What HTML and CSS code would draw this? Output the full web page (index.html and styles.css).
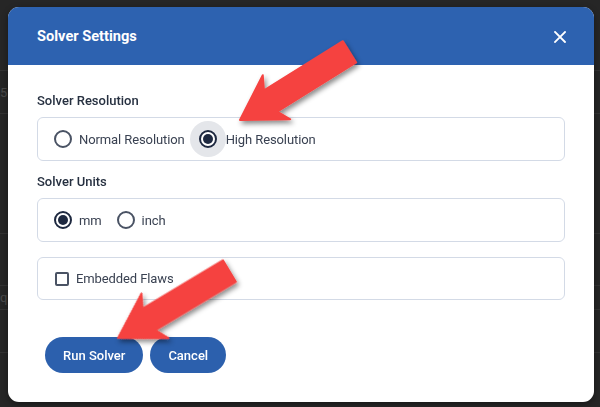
FILE: index.html
```html
<!DOCTYPE html>
<html>
<head>
<meta charset="utf-8">
<link rel="stylesheet" href="styles.css">
</head>
<body>
<div class="page">
  <div class="bg-row r1"></div>
  <div class="bg-row r2"><span>5</span></div>
  <div class="bg-row r3"></div>
  <div class="bg-row r4"></div>
  <div class="bg-row r5"><span>q</span></div>
  <div class="bg-row r6"></div>
</div>

<div class="overlay">
  <div class="dialog">
    <div class="header">
      <span class="title">Solver Settings</span>
      <svg class="close" width="12" height="12" viewBox="0 0 12 12"><path d="M1 1L11 11M11 1L1 11" stroke="#fff" stroke-width="1.8" stroke-linecap="square"/></svg>
    </div>
    <div class="body">
      <div class="label">Solver Resolution</div>
      <div class="box">
        <label class="opt"><span class="radio"></span>Normal Resolution</label>
        <label class="opt gap"><span class="radio checked focus"></span>High Resolution</label>
      </div>
      <div class="label l2">Solver Units</div>
      <div class="box">
        <label class="opt"><span class="radio checked"></span>mm</label>
        <label class="opt gap2"><span class="radio"></span>inch</label>
      </div>
      <div class="box b3">
        <label class="opt"><span class="check"></span>Embedded Flaws</label>
      </div>
      <div class="actions">
        <button class="btn">Run Solver</button>
        <button class="btn">Cancel</button>
      </div>
    </div>
  </div>

  <svg class="arrows" width="600" height="407" viewBox="0 0 600 407">
    <defs>
      <filter id="sh" x="-30%" y="-30%" width="160%" height="160%">
        <feDropShadow dx="2" dy="3" stdDeviation="2.5" flood-color="#000" flood-opacity="0.45"/>
      </filter>
    </defs>
    <g filter="url(#sh)">
      <g transform="translate(240,120) rotate(-31.9)">
        <polygon points="0,0 43,-26 36,-12.5 129,-12.5 129,12.5 36,12.5 43,26" fill="#f54341" stroke="#f54341" stroke-width="2" stroke-linejoin="round"/>
      </g>
      <g transform="translate(118,338) rotate(-31)">
        <polygon points="0,0 43,-26 36,-12.5 130,-12.5 130,12.5 36,12.5 43,26" fill="#f54341" stroke="#f54341" stroke-width="2" stroke-linejoin="round"/>
      </g>
    </g>
  </svg>
</div>
</body>
</html>
```

FILE: styles.css
```css
* { box-sizing: border-box; }
html, body {
  margin: 0;
  padding: 0;
  width: 600px;
  height: 407px;
  overflow: hidden;
  background: #262626;
  font-family: Roboto, "Liberation Sans", sans-serif;
}
.page {
  display: flex;
  flex-direction: column;
  padding-top: 28px;
}
.bg-row {
  height: 43px;
  border-bottom: 1px solid #333333;
  color: #4a4a4a;
  font-size: 13px;
  display: flex;
  align-items: center;
}
.r3 { height: 120px; }
.r4 { height: 52px; }
.r5 { height: 24px; }

.overlay {
  position: fixed;
  inset: 0;
}
.dialog {
  position: absolute;
  left: 8px;
  top: 7px;
  width: 586px;
  height: 395px;
  background: #fff;
  border-radius: 11px;
  overflow: hidden;
  box-shadow: 0 2px 6px rgba(0,0,0,0.4);
}
.header {
  height: 58px;
  background: #2d62b0;
  display: flex;
  align-items: center;
  justify-content: space-between;
  padding: 0 28px 0 29px;
}
.title {
  color: #fff;
  font-size: 14.6px;
  font-weight: 700;
}
.close { display: block; margin-top: 1px; }

.body {
  padding: 28px 29px 0 29px;
  display: flex;
  flex-direction: column;
}
.label {
  font-size: 13px;
  font-weight: 500;
  color: #263040;
  line-height: 16px;
  margin-bottom: 8px;
}
.l2 { margin-top: 13px; }
.box {
  height: 44px;
  border: 1px solid #d3dae6;
  border-radius: 6px;
  display: flex;
  align-items: center;
  padding-left: 16px;
}
.b3 { margin-top: 15px; height: 43px; }
.opt {
  display: flex;
  align-items: center;
  font-size: 13px;
  letter-spacing: -0.1px;
  color: #3a4252;
}
.gap { margin-left: 14px; }
.gap2 { margin-left: 15px; }
.radio {
  width: 18px;
  height: 18px;
  border: 2px solid #4a5364;
  border-radius: 50%;
  margin-right: 7px;
  background: #fff;
  position: relative;
  flex: none;
}
.gap .radio { margin-right: 9px; }
.radio.checked { border-color: #1e2940; }
.radio.checked::after {
  content: "";
  position: absolute;
  left: 2px;
  top: 2px;
  width: 10px;
  height: 10px;
  border-radius: 50%;
  background: #1e2940;
}
.radio.focus { box-shadow: 0 0 0 9px #e4e6ea; }
.check {
  width: 14px;
  height: 14px;
  border: 2px solid #4a5364;
  border-radius: 2px;
  margin-left: 1px;
  margin-right: 7px;
  flex: none;
}
.actions {
  display: flex;
  gap: 7px;
  margin-top: 37px;
  padding-left: 8px;
}
.btn {
  height: 36px;
  border: none;
  border-radius: 18px;
  background: #2c60ad;
  color: #fff;
  font-family: Roboto, "Liberation Sans", sans-serif;
  font-size: 13px;
  font-weight: 500;
  padding: 0 18px;
}
.arrows {
  position: absolute;
  left: 0;
  top: 0;
  pointer-events: none;
}
```
